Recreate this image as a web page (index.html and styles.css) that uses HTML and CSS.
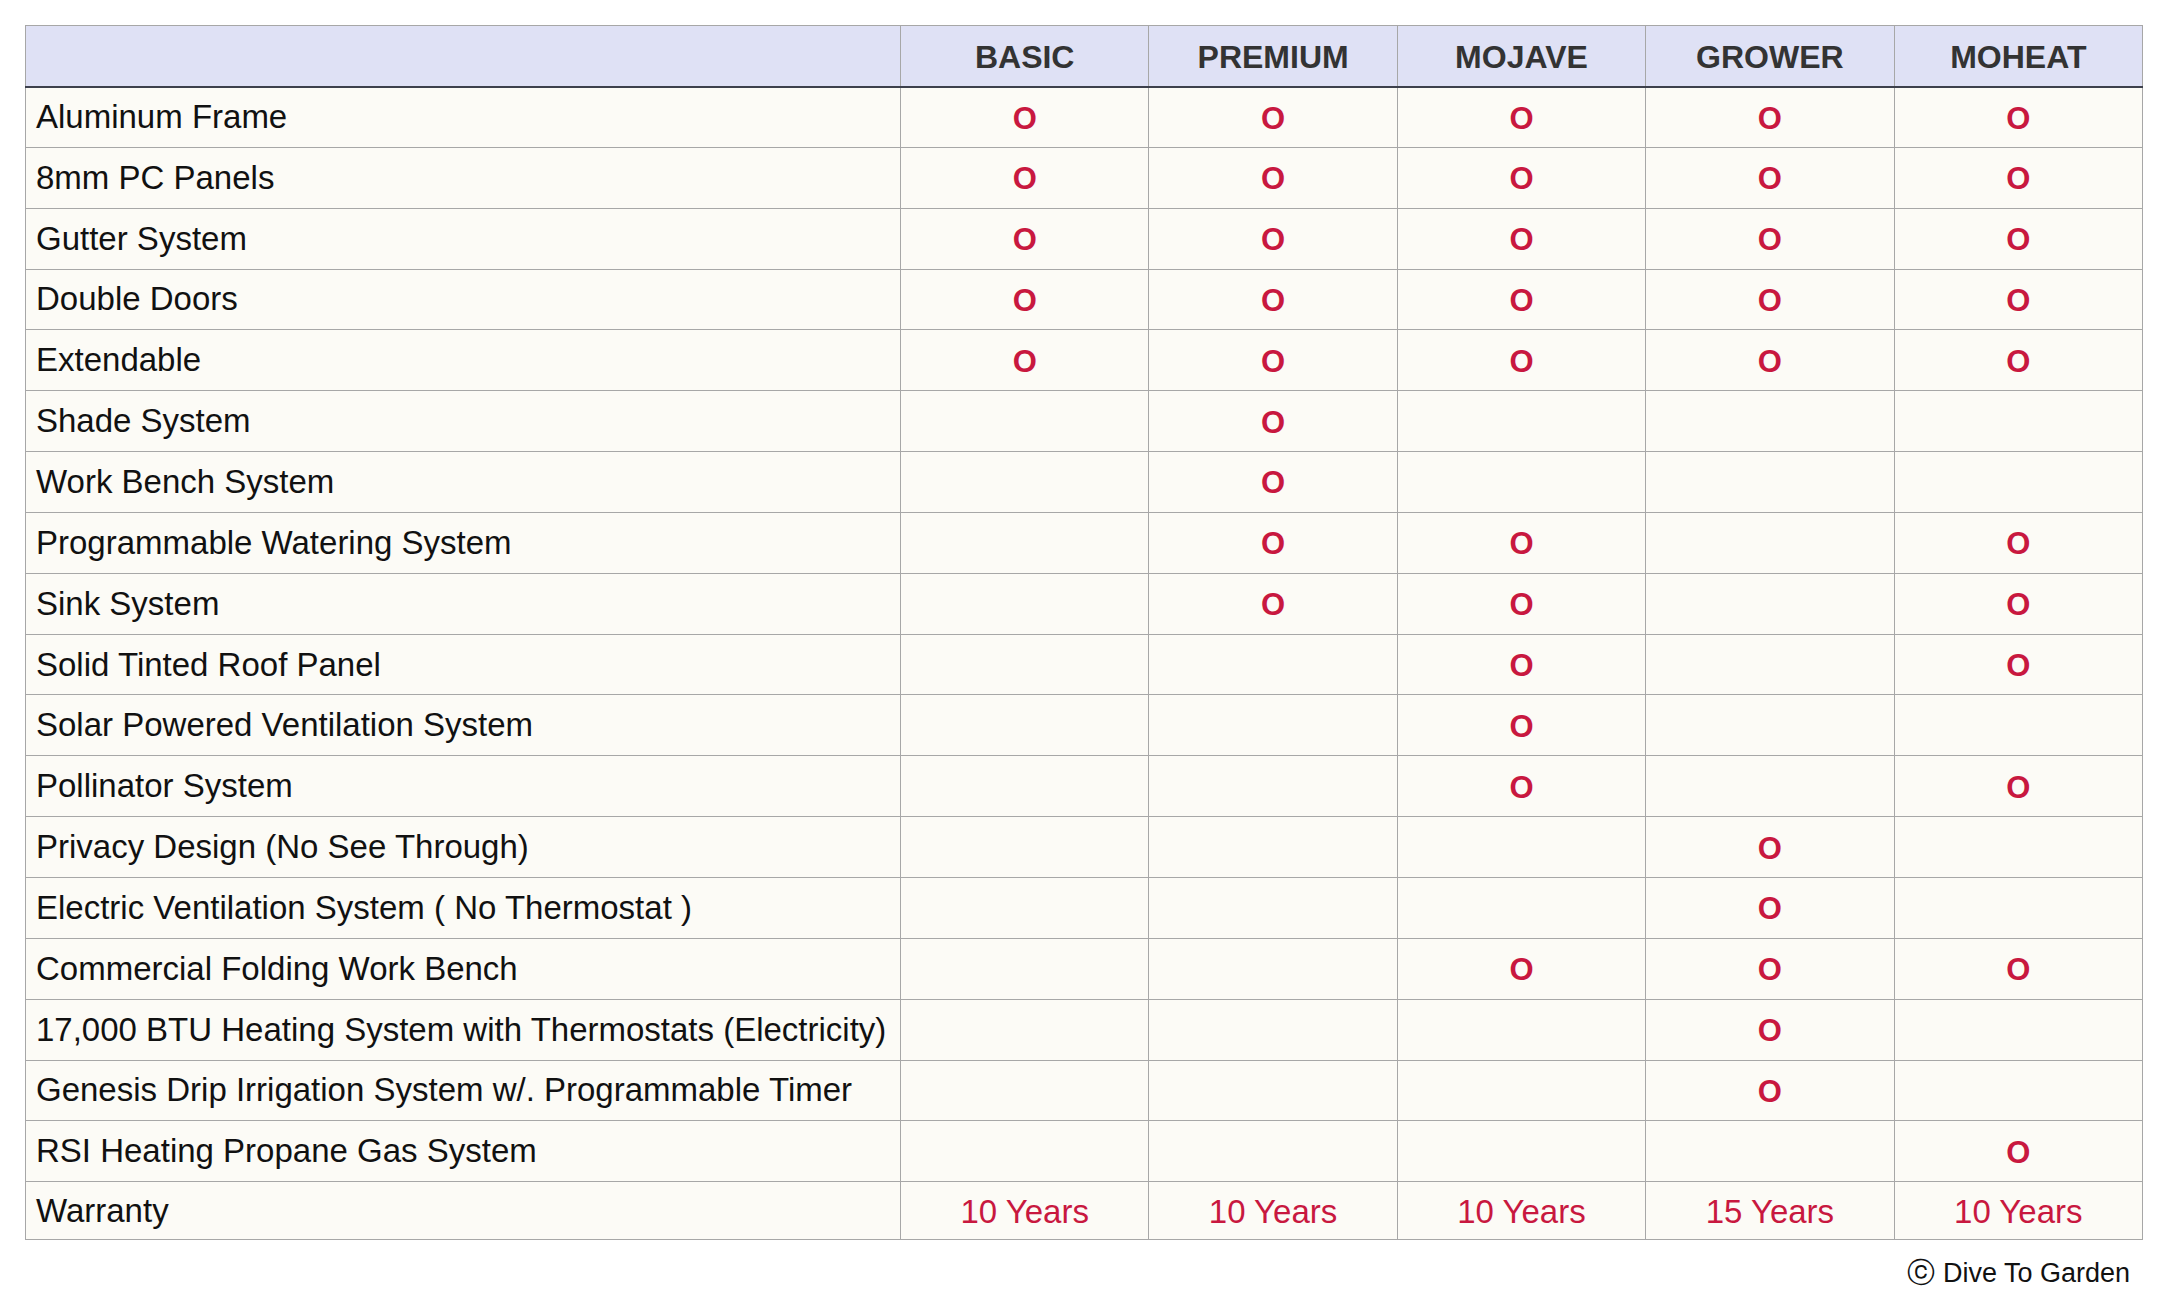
FILE: index.html
```html
<!DOCTYPE html>
<html lang="en">
<head>
<meta charset="utf-8">
<title>Greenhouse Models Compared</title>
<link rel="stylesheet" href="styles.css">
</head>
<body>
<div class="page">
  <table class="compare">
    <thead>
      <tr class="head-row">
        <th class="feature-head"></th>
        <th>BASIC</th>
        <th>PREMIUM</th>
        <th>MOJAVE</th>
        <th>GROWER</th>
        <th>MOHEAT</th>
      </tr>
    </thead>
    <tbody>
      <tr><td class="feature">Aluminum Frame</td><td class="mark">O</td><td class="mark">O</td><td class="mark">O</td><td class="mark">O</td><td class="mark">O</td></tr>
      <tr><td class="feature">8mm PC Panels</td><td class="mark">O</td><td class="mark">O</td><td class="mark">O</td><td class="mark">O</td><td class="mark">O</td></tr>
      <tr><td class="feature">Gutter System</td><td class="mark">O</td><td class="mark">O</td><td class="mark">O</td><td class="mark">O</td><td class="mark">O</td></tr>
      <tr><td class="feature">Double Doors</td><td class="mark">O</td><td class="mark">O</td><td class="mark">O</td><td class="mark">O</td><td class="mark">O</td></tr>
      <tr><td class="feature">Extendable</td><td class="mark">O</td><td class="mark">O</td><td class="mark">O</td><td class="mark">O</td><td class="mark">O</td></tr>
      <tr><td class="feature">Shade System</td><td class="mark"></td><td class="mark">O</td><td class="mark"></td><td class="mark"></td><td class="mark"></td></tr>
      <tr><td class="feature">Work Bench System</td><td class="mark"></td><td class="mark">O</td><td class="mark"></td><td class="mark"></td><td class="mark"></td></tr>
      <tr><td class="feature">Programmable Watering System</td><td class="mark"></td><td class="mark">O</td><td class="mark">O</td><td class="mark"></td><td class="mark">O</td></tr>
      <tr><td class="feature">Sink System</td><td class="mark"></td><td class="mark">O</td><td class="mark">O</td><td class="mark"></td><td class="mark">O</td></tr>
      <tr><td class="feature">Solid Tinted Roof Panel</td><td class="mark"></td><td class="mark"></td><td class="mark">O</td><td class="mark"></td><td class="mark">O</td></tr>
      <tr><td class="feature">Solar Powered Ventilation System</td><td class="mark"></td><td class="mark"></td><td class="mark">O</td><td class="mark"></td><td class="mark"></td></tr>
      <tr><td class="feature">Pollinator System</td><td class="mark"></td><td class="mark"></td><td class="mark">O</td><td class="mark"></td><td class="mark">O</td></tr>
      <tr><td class="feature">Privacy Design (No See Through)</td><td class="mark"></td><td class="mark"></td><td class="mark"></td><td class="mark">O</td><td class="mark"></td></tr>
      <tr><td class="feature">Electric Ventilation System ( No Thermostat )</td><td class="mark"></td><td class="mark"></td><td class="mark"></td><td class="mark">O</td><td class="mark"></td></tr>
      <tr><td class="feature">Commercial Folding Work Bench</td><td class="mark"></td><td class="mark"></td><td class="mark">O</td><td class="mark">O</td><td class="mark">O</td></tr>
      <tr><td class="feature">17,000 BTU Heating System with Thermostats (Electricity)</td><td class="mark"></td><td class="mark"></td><td class="mark"></td><td class="mark">O</td><td class="mark"></td></tr>
      <tr><td class="feature">Genesis Drip Irrigation System w/. Programmable Timer</td><td class="mark"></td><td class="mark"></td><td class="mark"></td><td class="mark">O</td><td class="mark"></td></tr>
      <tr><td class="feature">RSI Heating Propane Gas System</td><td class="mark"></td><td class="mark"></td><td class="mark"></td><td class="mark"></td><td class="mark">O</td></tr>
      <tr class="warranty-row"><td class="feature">Warranty</td><td class="years">10 Years</td><td class="years">10 Years</td><td class="years">10 Years</td><td class="years">15 Years</td><td class="years">10 Years</td></tr>
    </tbody>
  </table>
  <p class="credit"><span class="copy">ⓒ</span> Dive To Garden</p>
</div>
</body>
</html>
```

FILE: styles.css
```css
html, body {
  margin: 0;
  padding: 0;
  background: #ffffff;
}

.page {
  padding: 25px 19px 0 25px;
  font-family: "Liberation Sans", Arial, sans-serif;
  color: #111111;
}

.compare {
  width: 2118px;
  border-collapse: collapse;
  table-layout: fixed;
  border: 1px solid #a7a7a7;
}

.compare th,
.compare td {
  border: 1px solid #a7a7a7;
  padding: 0;
}

.compare th {
  background: #dfe1f5;
  color: #333333;
  font-size: 32px;
  font-weight: bold;
  text-align: center;
  border-bottom: 2px solid #3d404c;
  padding-top: 3px;
}

.compare .feature-head {
  width: 874px;
}

.head-row {
  height: 61px;
}

.compare tbody tr {
  height: 60.85px;
}

.compare tbody .warranty-row {
  height: 58px;
}

.compare td {
  background: #fcfbf6;
}

.feature {
  font-size: 33px;
  padding-left: 10px !important;
  white-space: nowrap;
  color: #111111;
}

.mark {
  text-align: center;
  color: #c8183f;
  font-size: 31px;
  font-weight: bold;
  padding-top: 3px !important;
}

.years {
  text-align: center;
  color: #c8183f;
  font-size: 33px;
  padding-top: 2px !important;
}

.credit {
  margin: 14px 13px 0 0;
  text-align: right;
  font-size: 27px;
  color: #111111;
}

.copy {
  font-family: "DejaVu Sans", sans-serif;
  font-size: 28px;
}
```
